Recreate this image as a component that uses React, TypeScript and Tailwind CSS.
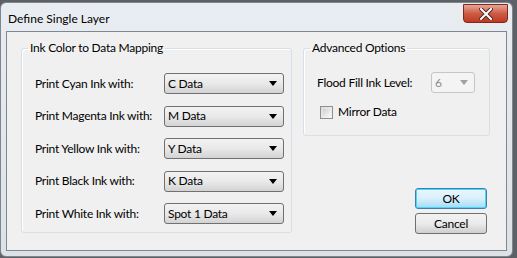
import React from 'react'

const font = { fontFamily: 'Lato, "Liberation Sans", sans-serif' }

function Combo({ value, disabled = false, className = '' }: { value: string; disabled?: boolean; className?: string }) {
  return (
    <div
      className={
        'h-[21px] flex items-center justify-between pl-[3px] pr-[6px] rounded-[3px] border ' +
        (disabled
          ? 'border-[#c3c7ca] bg-[#f4f4f4] text-[#8a8a8a] '
          : 'border-[#707070] bg-gradient-to-b from-[#f3f3f3] via-[#e9e9e9] to-[#d3d3d3] text-black ') +
        className
      }
    >
      <span className="leading-none">{value}</span>
      <svg width="8" height="5" viewBox="0 0 8 5">
        <path d="M0 0 H8 L4 5 Z" fill={disabled ? '#a0a0a0' : '#000'} />
      </svg>
    </div>
  )
}

function Row({ label, value }: { label: string; value: string }) {
  return (
    <div className="flex items-center h-[21px]">
      <div className="w-[129px] whitespace-nowrap">{label}</div>
      <Combo value={value} className="w-[120px]" />
    </div>
  )
}

export default function App() {
  const rows = [
    ['Print Cyan Ink with:', 'C Data'],
    ['Print Magenta Ink with:', 'M Data'],
    ['Print Yellow Ink with:', 'Y Data'],
    ['Print Black Ink with:', 'K Data'],
    ['Print White Ink with:', 'Spot 1 Data'],
  ]

  return (
    <div className="w-[517px] h-[258px] overflow-hidden bg-[#5d6166] flex text-[12px] tracking-[-0.25px] text-black" style={font}>
      {/* window frame */}
      <div className="mt-[2px] w-[513px] h-[255px] flex flex-col rounded-[6px] border border-[#7d858d] bg-gradient-to-b from-[#e9edf1] to-[#dde2e7]">
        {/* title bar */}
        <div className="h-[28px] flex items-start justify-between">
          <div className="pl-[7px] pt-[7px] text-black tracking-normal">Define Single Layer</div>
          <div className="mr-[4px] mt-[1px] w-[45px] h-[19px] rounded-b-[4px] border border-[#7a2a1e] bg-gradient-to-b from-[#e6a697] via-[#cd5b45] to-[#c0391f] flex items-center justify-center">
            <svg width="14" height="12" viewBox="0 0 14 12">
              <path d="M2 1 L12 11 M12 1 L2 11" stroke="#4a2a26" strokeWidth="4" strokeLinecap="square" />
              <path d="M2 1 L12 11 M12 1 L2 11" stroke="#ffffff" strokeWidth="2" strokeLinecap="square" />
            </svg>
          </div>
        </div>
        {/* client */}
        <div className="mx-[5px] h-[220px] border border-[#7f8891] bg-[#f0f0f0] flex pl-[14px] pt-[9px] pr-[16px]">
          <fieldset className="w-[272px] h-[192px] border border-[#d5dfe5] rounded-[3px] shadow-[inset_1px_1px_0_#fff] pl-[13px] pt-[18px]">
            <legend className="ml-[-7px] px-[2px] leading-[14px]">Ink Color to Data Mapping</legend>
            <div className="flex flex-col gap-[11.5px]">
              {rows.map(([l, v]) => (
                <Row key={l} label={l} value={v} />
              ))}
            </div>
          </fieldset>
          <div className="ml-[11px] flex-1 flex flex-col">
            <fieldset className="w-[187px] h-[95px] border border-[#d5dfe5] rounded-[3px] shadow-[inset_1px_1px_0_#fff] pl-[13px] pt-[17px]">
              <legend className="ml-[-7px] px-[2px] leading-[14px]">Advanced Options</legend>
              <div className="flex items-center h-[21px]">
                <div className="w-[114px] whitespace-nowrap">Flood Fill Ink Level:</div>
                <Combo value="6" disabled className="w-[44px]" />
              </div>
              <div className="mt-[10px] ml-[3px] flex items-center gap-[5px]">
                <div className="w-[13px] h-[13px] border border-[#8e8f8f] bg-gradient-to-br from-[#dcdcdc] to-[#f6f6f6] p-[2px]">
                  <div className="w-full h-full bg-gradient-to-br from-[#cbcfd5] to-[#f6f6f6]" />
                </div>
                <span>Mirror Data</span>
              </div>
            </fieldset>
            <div className="mt-auto mb-[16px] self-end mr-[3px] flex flex-col gap-[4px]">
              <button className="w-[72px] h-[21px] rounded-[3px] border border-[#3c7fb1] shadow-[inset_0_0_0_1px_#48d8fb] bg-gradient-to-b from-[#eaf6fd] via-[#d9f0fc] to-[#a7d9f5] leading-none">
                OK
              </button>
              <button className="w-[72px] h-[21px] rounded-[3px] border border-[#707070] bg-gradient-to-b from-[#f2f2f2] via-[#ebebeb] to-[#cfcfcf] leading-none">
                Cancel
              </button>
            </div>
          </div>
        </div>
      </div>
    </div>
  )
}
